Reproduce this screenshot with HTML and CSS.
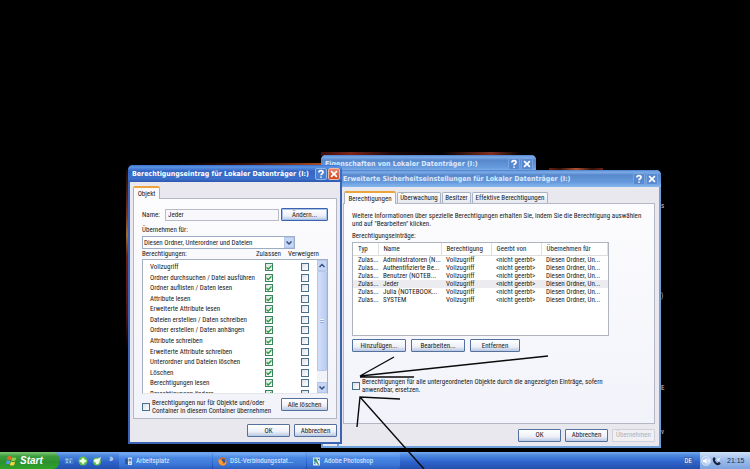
FILE: index.html
```html
<!DOCTYPE html>
<html lang="de">
<head>
<meta charset="utf-8">
<title>Lokaler Datenträger (I:)</title>
<link rel="stylesheet" href="styles.css">
</head>
<body>
<main class="desktop">
  <div class="wallpaper wallpaper-left"></div>
  <div class="wallpaper wallpaper-top"></div>
  <div class="wallpaper wallpaper-back"></div>
  <div class="wallpaper wallpaper-right"></div>
  <span class="icon-label label-a">s</span>
  <span class="icon-label label-b">)</span>
  <span class="icon-label label-c">E</span>
  <span class="icon-label label-d">v</span>

  <section class="window inactive win-properties">
    <header class="titlebar">
      <h2>Eigenschaften von Lokaler Datenträger (I:)</h2>
      <button class="cap" aria-label="Hilfe"><svg viewBox="0 0 12 12"><path d="M3.5 4.2C3.5 1.2 8.5 1.2 8.5 4C8.5 5.8 6 5.6 6 7.6M6 9v1.5"/></svg></button>
      <button class="cap" aria-label="Schließen"><svg viewBox="0 0 12 12"><path d="M2.5 2.5l7 7M9.5 2.5l-7 7"/></svg></button>
    </header>
  </section>

  <section class="window inactive win-security">
    <header class="titlebar">
      <h2>Erweiterte Sicherheitseinstellungen für Lokaler Datenträger (I:)</h2>
      <button class="cap" aria-label="Hilfe"><svg viewBox="0 0 12 12"><path d="M3.5 4.2C3.5 1.2 8.5 1.2 8.5 4C8.5 5.8 6 5.6 6 7.6M6 9v1.5"/></svg></button>
      <button class="cap" aria-label="Schließen"><svg viewBox="0 0 12 12"><path d="M2.5 2.5l7 7M9.5 2.5l-7 7"/></svg></button>
    </header>
    <div class="tabs">
      <button class="tab selected tab-perm">Berechtigungen</button>
      <button class="tab tab-audit">Überwachung</button>
      <button class="tab tab-owner">Besitzer</button>
      <button class="tab tab-effective">Effektive Berechtigungen</button>
    </div>
    <div class="panel">
      <p class="intro">Weitere Informationen über spezielle Berechtigungen erhalten Sie, indem Sie die Berechtigung auswählen<br>und auf "Bearbeiten" klicken.</p>
      <p class="caption">Berechtigungseinträge:</p>
      <div class="entries">
        <table>
          <colgroup><col class="c-type"><col class="c-name"><col class="c-right"><col class="c-from"><col></colgroup>
          <thead><tr><th>Typ</th><th>Name</th><th>Berechtigung</th><th>Geerbt von</th><th>Übernehmen für</th></tr></thead>
          <tbody>
            <tr><td>Zulas...</td><td>Administratoren (N...</td><td>Vollzugriff</td><td>&lt;nicht geerbt&gt;</td><td>Diesen Ordner, Un...</td></tr>
            <tr><td>Zulas...</td><td>Authentifizierte Be...</td><td>Vollzugriff</td><td>&lt;nicht geerbt&gt;</td><td>Diesen Ordner, Un...</td></tr>
            <tr><td>Zulas...</td><td>Benutzer (NOTEB...</td><td>Vollzugriff</td><td>&lt;nicht geerbt&gt;</td><td>Diesen Ordner, Un...</td></tr>
            <tr class="current"><td>Zulas...</td><td>Jeder</td><td>Vollzugriff</td><td>&lt;nicht geerbt&gt;</td><td>Diesen Ordner, Un...</td></tr>
            <tr><td>Zulas...</td><td>Julia (NOTEBOOK...</td><td>Vollzugriff</td><td>&lt;nicht geerbt&gt;</td><td>Diesen Ordner, Un...</td></tr>
            <tr><td>Zulas...</td><td>SYSTEM</td><td>Vollzugriff</td><td>&lt;nicht geerbt&gt;</td><td>Diesen Ordner, Un...</td></tr>
          </tbody>
        </table>
      </div>
      <div class="entry-actions">
        <button class="btn">Hinzufügen...</button>
        <button class="btn">Bearbeiten...</button>
        <button class="btn">Entfernen</button>
      </div>
      <label class="check replace"><input type="checkbox"><span>Berechtigungen für alle untergeordneten Objekte durch die angezeigten Einträge, sofern<br>anwendbar, ersetzen.</span></label>
    </div>
    <footer class="actions">
      <button class="btn">OK</button>
      <button class="btn">Abbrechen</button>
      <button class="btn" disabled>Übernehmen</button>
    </footer>
  </section>

  <section class="window win-entry">
    <header class="titlebar">
      <h2>Berechtigungseintrag für Lokaler Datenträger (I:)</h2>
      <button class="cap" aria-label="Hilfe"><svg viewBox="0 0 12 12"><path d="M3.5 4.2C3.5 1.2 8.5 1.2 8.5 4C8.5 5.8 6 5.6 6 7.6M6 9v1.5"/></svg></button>
      <button class="cap close" aria-label="Schließen"><svg viewBox="0 0 12 12"><path d="M2.5 2.5l7 7M9.5 2.5l-7 7"/></svg></button>
    </header>
    <div class="tabs">
      <button class="tab selected tab-object">Objekt</button>
    </div>
    <div class="panel">
      <div class="name-row">
        <label for="name">Name:</label>
        <input class="field" id="name" type="text" value="Jeder" readonly>
        <button class="btn focus">Ändern...</button>
      </div>
      <label class="apply-label" for="apply">Übernehmen für:</label>
      <div class="combo">
        <select id="apply"><option>Diesen Ordner, Unterordner und Dateien</option></select>
        <span class="arrow"><svg viewBox="0 0 8 8"><path d="M1.5 2.5L4 5l2.500-2.500"/></svg></span>
      </div>
      <div class="heads"><span>Berechtigungen:</span><span>Zulassen</span><span>Verweigern</span></div>
      <div class="rights">
        <ul>
          <li><span>Vollzugriff</span><input type="checkbox" checked aria-label="Zulassen"><input type="checkbox" aria-label="Verweigern"></li>
          <li><span>Ordner durchsuchen / Datei ausführen</span><input type="checkbox" checked aria-label="Zulassen"><input type="checkbox" aria-label="Verweigern"></li>
          <li><span>Ordner auflisten / Daten lesen</span><input type="checkbox" checked aria-label="Zulassen"><input type="checkbox" aria-label="Verweigern"></li>
          <li><span>Attribute lesen</span><input type="checkbox" checked aria-label="Zulassen"><input type="checkbox" aria-label="Verweigern"></li>
          <li><span>Erweiterte Attribute lesen</span><input type="checkbox" checked aria-label="Zulassen"><input type="checkbox" aria-label="Verweigern"></li>
          <li><span>Dateien erstellen / Daten schreiben</span><input type="checkbox" checked aria-label="Zulassen"><input type="checkbox" aria-label="Verweigern"></li>
          <li><span>Ordner erstellen / Daten anhängen</span><input type="checkbox" checked aria-label="Zulassen"><input type="checkbox" aria-label="Verweigern"></li>
          <li><span>Attribute schreiben</span><input type="checkbox" checked aria-label="Zulassen"><input type="checkbox" aria-label="Verweigern"></li>
          <li><span>Erweiterte Attribute schreiben</span><input type="checkbox" checked aria-label="Zulassen"><input type="checkbox" aria-label="Verweigern"></li>
          <li><span>Unterordner und Dateien löschen</span><input type="checkbox" checked aria-label="Zulassen"><input type="checkbox" aria-label="Verweigern"></li>
          <li><span>Löschen</span><input type="checkbox" checked aria-label="Zulassen"><input type="checkbox" aria-label="Verweigern"></li>
          <li><span>Berechtigungen lesen</span><input type="checkbox" checked aria-label="Zulassen"><input type="checkbox" aria-label="Verweigern"></li>
          <li><span>Berechtigungen ändern</span><input type="checkbox" checked aria-label="Zulassen"><input type="checkbox" aria-label="Verweigern"></li>
        </ul>
        <div class="scroll">
          <span class="arrow"><svg viewBox="0 0 8 8"><path d="M1.500 5L4 2.500 6.500 5"/></svg></span>
          <span class="thumb"><i></i></span>
          <span class="arrow"><svg viewBox="0 0 8 8"><path d="M1.500 2.500L4 5l2.500-2.500"/></svg></span>
        </div>
      </div>
      <div class="inherit-row">
        <label class="check"><input type="checkbox"><span>Berechtigungen nur für Objekte und/oder<br>Container in diesem Container übernehmen</span></label>
        <button class="btn">Alle löschen</button>
      </div>
    </div>
    <footer class="actions">
      <button class="btn">OK</button>
      <button class="btn">Abbrechen</button>
    </footer>
  </section>

</main>

<nav class="taskbar">
  <button class="start">
    <svg viewBox="0 0 20 20"><path fill="#f0642c" d="M3 3q3-2 7 0L8.500 9q-3-2-7 0z"/><path fill="#8fd14a" d="M11 4q4 2 8 0l-2 6q-4 2-7.500 0z"/><path fill="#4f9cf0" d="M1 11q4-2 7 0l-2 6q-3-2-6 0z"/><path fill="#ffd23c" d="M9 12q4 2 7.500 0L15 18q-4 2-8 0z"/></svg>
    <span>Start</span>
  </button>
  <div class="quick">
    <svg viewBox="0 0 20 20"><path fill="#3f78c4" d="M1 3h18v13H1z"/><path fill="#9cc4ec" d="M3 5h6v4H3zM11 5h6v2h-6zM11 9h3v5h-3zM4 11h4v3H4z"/></svg>
    <svg viewBox="0 0 20 20"><circle cx="10" cy="10" r="9" fill="#63bd4e"/><path fill="#f2ffe6" d="M10 3l3 4 5 3-5 3-3 4-3-4-5-3 5-3z"/></svg>
    <svg viewBox="0 0 20 20"><circle cx="10" cy="11" r="8" fill="#63bd4e"/><path fill="#f2ffe6" d="M3 10q3-6 8-4l7-4-3 8q0 6-6 7-1-5-6-7z"/></svg>
    <span>»</span>
  </div>
  <div class="tasks">
    <button class="task"><svg viewBox="0 0 16 16"><path fill="#29579e" d="M2 3h5v10H2z"/><path fill="#e6edf5" d="M7 1h7v13H7z"/><path fill="#6481ae" d="M8 3h5v5H8zM9 10h3v2H9z"/></svg>Arbeitsplatz</button>
    <button class="task"><svg viewBox="0 0 16 16"><circle cx="8" cy="8" r="7" fill="#e0641c"/><circle cx="9" cy="7" r="4" fill="#3058a0"/><path fill="#ff9c30" d="M1 4l3 1 2-2 1 4 3 2-3 3 5-1 3-5q1 9-7 9-8-1-7-11z"/></svg>DSL-Verbindungsstat...</button>
    <button class="task"><svg viewBox="0 0 16 16"><path fill="#f4f8f0" d="M2 1h12v14H2z"/><path fill="#3b9484" d="M3 3q5-2 6 3l4 8q-3 1-5-4-5 0-5-7z"/><path fill="#244c98" d="M9 3h4v4zM4 9l3 4H4z"/></svg>Adobe Photoshop</button>
  </div>
  <span class="lang">DE</span>
  <div class="tray">
    <svg viewBox="0 0 20 20"><circle cx="10" cy="10" r="9" fill="#b5cdef" stroke="#e9f2ff"/><path fill="#fff" d="M4 8h3l4-4v12l-4-4H4z"/><path fill="none" stroke="#fff" stroke-width="1.500" d="M13 7q3 3 0 6M15 5q4 5 0 10"/></svg>
    <svg viewBox="0 0 20 20"><path fill="#17243e" d="M2 4q3-3 5 1l-1 4q2 4 5 5l3-2q5 2 2 5-6 4-11-2T2 4z"/><path fill="none" stroke="#fff" stroke-width="1.500" d="M11 9l6-6M12 4l-1 5 5-1"/></svg>
    <time>21:15</time>
  </div>
</nav>

<svg class="ink" width="750" height="469" viewBox="0 0 750 469" aria-hidden="true">
  <path d="M394 357L360 376L548 356M360 377L414 377M400 399L360 397L357 427M360 397L424 469"/>
</svg>
</body>
</html>
```
FILE: styles.css
```css
* { box-sizing: border-box; }
body {
  margin: 0;
  min-height: 100vh;
  display: flex;
  flex-direction: column;
  background: #000;
  color: #222;
  font: 7px/8px "Roboto Condensed", Roboto, "Liberation Sans", sans-serif;
  overflow: hidden;
}
h2, p, ul { margin: 0; padding: 0; }
button, input, select { font: inherit; color: inherit; margin: 0; padding: 0; }
button { white-space: nowrap; }
.desktop { flex: 1; }

/* wallpaper showing between the windows */
.wallpaper { position: absolute; }
.wallpaper-left { left: 126px; top: 170px; width: 3px; height: 180px; background: linear-gradient(#200a08, #7c3418 25%, #a07030 36%, #6c2010 48%, #501414 80%, #000); }
.wallpaper-top { left: 170px; top: 163px; width: 152px; height: 3px; background: linear-gradient(90deg, #000, #3a140c 50%, #a84c28); }
.wallpaper-back { left: 321px; top: 152px; width: 200px; height: 4px; background: linear-gradient(90deg, #3c100c, #7c2418 15%, #200808 35%, #000 60%, #803020 85%, #000); }
.wallpaper-right { left: 549px; top: 168px; width: 54px; height: 3px; background: linear-gradient(90deg, #702010, #301008 20%, #b05030 50%, #301008 80%, #702010); }
.icon-label { position: absolute; left: 661px; color: #ccc; }
.label-a { top: 202px; }
.label-b { top: 292px; }
.label-c { top: 384px; }
.label-d { top: 428px; }

.window {
  position: absolute;
  display: flex;
  flex-direction: column;
  border: solid #3c62b4;
  border-width: 0 2px 2px;
  border-radius: 5px 5px 0 0;
  background: #e9e8ee;
}
.window.inactive { border-color: #6f9fd8; }
.win-properties { left: 321px; top: 155px; width: 215px; height: 293px; }
.win-security { left: 337px; top: 170px; width: 324px; height: 278px; padding: 0 4px; }
.win-entry { left: 128px; top: 165px; width: 214px; height: 279px; padding: 0 3px; }

.titlebar {
  flex: none;
  display: flex;
  align-items: center;
  gap: 1px;
  height: 17px;
  margin: 0 -6px;
  padding: 0 3px 0 6px;
  border-radius: 5px 5px 0 0;
  background: linear-gradient(#3a70cc, #5c94e4 12%, #3466c4 35%, #3a70cc 80%, #3058ac);
  color: #fff;
}
.inactive .titlebar { background: linear-gradient(#4c80cc, #7cace8 12%, #5888cc 30%, #6498dc 70%, #86b8ee); }
.win-properties .titlebar { margin: 0 -2px; padding: 0 3px 0 4px; }
.win-entry .titlebar { margin: 0 -5px; padding: 0 2px 0 4px; }
.titlebar h2 { flex: 1; font: bold 7px/12px "DejaVu Sans Condensed", "DejaVu Sans", sans-serif; white-space: nowrap; }
.inactive h2 { color: #dce9fb; }
.cap { width: 12px; height: 12px; border: 1px solid #8fb4ea; border-radius: 2px; background: #4a7ed0; }
.inactive .cap { border-color: #78a4e0; background: #5888d0; }
.cap svg { display: block; width: 100%; height: 100%; fill: none; stroke: #fff; stroke-width: 2; }
.cap.close { border-color: #f0b8a8; background: linear-gradient(#e88468, #d04820); }

.tabs { display: flex; align-items: flex-end; gap: 1px; height: 16px; }
.win-security .tabs { padding-left: 1px; }
.tab {
  height: 11px;
  border: 1px solid #a8b4c4;
  border-bottom: 0;
  border-radius: 2px 2px 0 0;
  background: linear-gradient(#fcfcfe, #e6e8f0);
  text-align: center;
}
.tab.selected { position: relative; height: 13px; margin-bottom: -1px; border-top: 2px solid #eaa53c; background: #fbfbfe; }
.tab-object { width: 27px; }
.tab-perm { width: 52px; }
.tab-audit { width: 44px; }
.tab-owner { width: 29px; }
.tab-effective { width: 76px; }

.panel {
  flex: 1;
  border: 1px solid #b4b8c4;
  background: linear-gradient(#fcfcfe, #f2f3fa);
  padding: 0 8px;
}
.btn {
  height: 13px;
  border: 1px solid #54709c;
  border-radius: 1px;
  background: linear-gradient(#fff, #eef0f8 60%, #b8c8e4);
  line-height: 10px;
  text-align: center;
}
.btn.focus { border-color: #3c64a8; box-shadow: inset 0 0 0 1px #a4c0ec; }
.btn:disabled { border-color: #d0d0d8; background: #f0f0f4; color: #b0b0b4; }
.actions { display: flex; justify-content: flex-end; align-items: center; gap: 4px; }
.actions .btn { width: 43px; }
.win-security .actions { height: 22px; }
.win-entry .actions { height: 23px; }

input[type="checkbox"] {
  appearance: none;
  flex: none;
  display: grid;
  place-items: center;
  width: 8px;
  height: 8px;
  border: 1px solid #48708c;
  background: linear-gradient(135deg, #dcdfe6, #fff);
}
input[type="checkbox"]:checked { border-color: #3c8460; }
input[type="checkbox"]:checked::after {
  content: "";
  width: 6px;
  height: 6px;
  background: #27a038;
  clip-path: polygon(8% 40%, 38% 62%, 92% 8%, 92% 42%, 38% 95%, 8% 72%);
}
.check { display: flex; align-items: center; gap: 2px; white-space: nowrap; }

/* advanced security window */
.intro { padding-top: 8px; white-space: nowrap; }
.caption { margin-top: 4px; }
.entries { width: 257px; height: 94px; margin-top: 2px; border: 1px solid #b0b4bc; background: #fff; }
table { width: 100%; table-layout: fixed; border-collapse: collapse; }
.c-type { width: 25px; }
.c-name { width: 63px; }
.c-right { width: 50px; }
.c-from { width: 50px; }
th, td { padding: 0 0 0 5px; font-weight: normal; text-align: left; white-space: nowrap; }
th { height: 12px; border-bottom: 1px solid #ddd; border-right: 1px solid #e0e0e4; }
td { height: 8px; }
.current { background: #ececf0; }
.entry-actions { display: flex; gap: 5px; margin-top: 3px; }
.entry-actions .btn { width: 54px; }
.entry-actions .btn:last-child { width: 50px; }
.replace { margin-top: 26px; }

/* permission entry window */
.name-row { display: flex; align-items: center; margin-top: 9px; }
.name-row label { width: 23px; }
.field { flex: 1; min-width: 0; height: 12px; margin-right: 2px; padding: 0 2px; border: 1px solid #b8bcc8; background: #f8f8fc; }
.name-row .btn, .inherit-row .btn { width: 47px; }
.apply-label { display: block; margin-top: 5px; }
.combo { display: flex; width: 153px; height: 13px; margin-top: 2px; border: 1px solid #9cacc4; background: #fff; }
.combo select { flex: 1; appearance: none; border: 0; padding: 0 1px; background: none; }
.arrow { display: grid; place-items: center; width: 10px; height: 11px; border: 1px solid #b4c8ec; background: #c6d6f4; }
.arrow svg { width: 8px; height: 8px; fill: none; stroke: #34507c; stroke-width: 1.5; }
.heads { display: grid; grid-template-columns: 114px 32px 1fr; margin-top: 1px; white-space: nowrap; }
.rights { display: flex; height: 135px; margin-top: 1px; border: 1px solid #a4b0c0; border-bottom-color: #e4e6ec; background: #fff; overflow: hidden; }
.rights ul { flex: 1; display: grid; grid-template-rows: repeat(13, 1fr); height: 139px; padding-top: 2px; list-style: none; }
.rights li { display: grid; grid-template-columns: 115px 36px 1fr; align-items: center; padding-left: 7px; white-space: nowrap; }
.scroll { display: flex; flex-direction: column; width: 10px; background: #f2f3f8; }
.thumb { height: 100px; display: grid; place-items: center; border: 1px solid #b4c8ec; border-radius: 1px; background: linear-gradient(90deg, #d2def8, #bccdf2); }
.thumb i { width: 4px; height: 4px; background: repeating-linear-gradient(#eef4fe 0 1px, #94acdc 1px 2px); }
.scroll .arrow:last-child { margin-top: auto; }
.inherit-row { display: flex; justify-content: space-between; align-items: flex-start; margin-top: 4px; }
.inherit-row .check { margin-top: 1px; }

/* taskbar */
.taskbar {
  position: relative;
  display: flex;
  align-items: stretch;
  height: 17px;
  background: linear-gradient(#76a8ec, #4c88e0 20%, #2c62cc 60%, #2450ac);
  color: #e4efff;
}
.start {
  display: flex;
  align-items: center;
  gap: 3px;
  width: 59px;
  padding-left: 6px;
  border: 0;
  border-radius: 0 6px 6px 0;
  background: linear-gradient(#80c878, #3c9c3c 25%, #2c9030 60%, #30a428);
  color: #fff;
  font: italic bold 10px/12px "Liberation Sans", sans-serif;
}
.start svg { width: 11px; height: 11px; }
.quick { display: flex; align-items: center; gap: 4px; width: 60px; padding-left: 5px; }
.quick svg { width: 10px; height: 10px; }
.quick span { margin: 0 0 4px 3px; font-size: 10px; }
.tasks { flex: 1; display: flex; gap: 1px; padding-top: 1px; }
.task {
  display: flex;
  align-items: center;
  gap: 3px;
  width: 93px;
  padding-left: 5px;
  border: 0;
  border-radius: 2px;
  background: linear-gradient(#78acf2, #4a88e4 30%, #3c78d8 70%, #2c60c0);
}
.task svg { width: 9px; height: 9px; }
.lang { align-self: center; margin-right: 7px; padding: 0 1px; background: #3a62b0; color: #fff; }
.tray { display: flex; align-items: center; gap: 1px; width: 50px; padding-left: 1px; background: linear-gradient(#d0e2f8, #a4c0ec 40%, #7ca4e0); color: #1c2c4c; font-family: "Liberation Sans", sans-serif; }
.tray svg { width: 10px; height: 10px; }
.tray time { margin-left: 4px; }

/* pen strokes over the screen */
.ink { position: absolute; left: 0; top: 0; pointer-events: none; fill: none; stroke: #0a0a0a; stroke-width: 1.4; }
```
